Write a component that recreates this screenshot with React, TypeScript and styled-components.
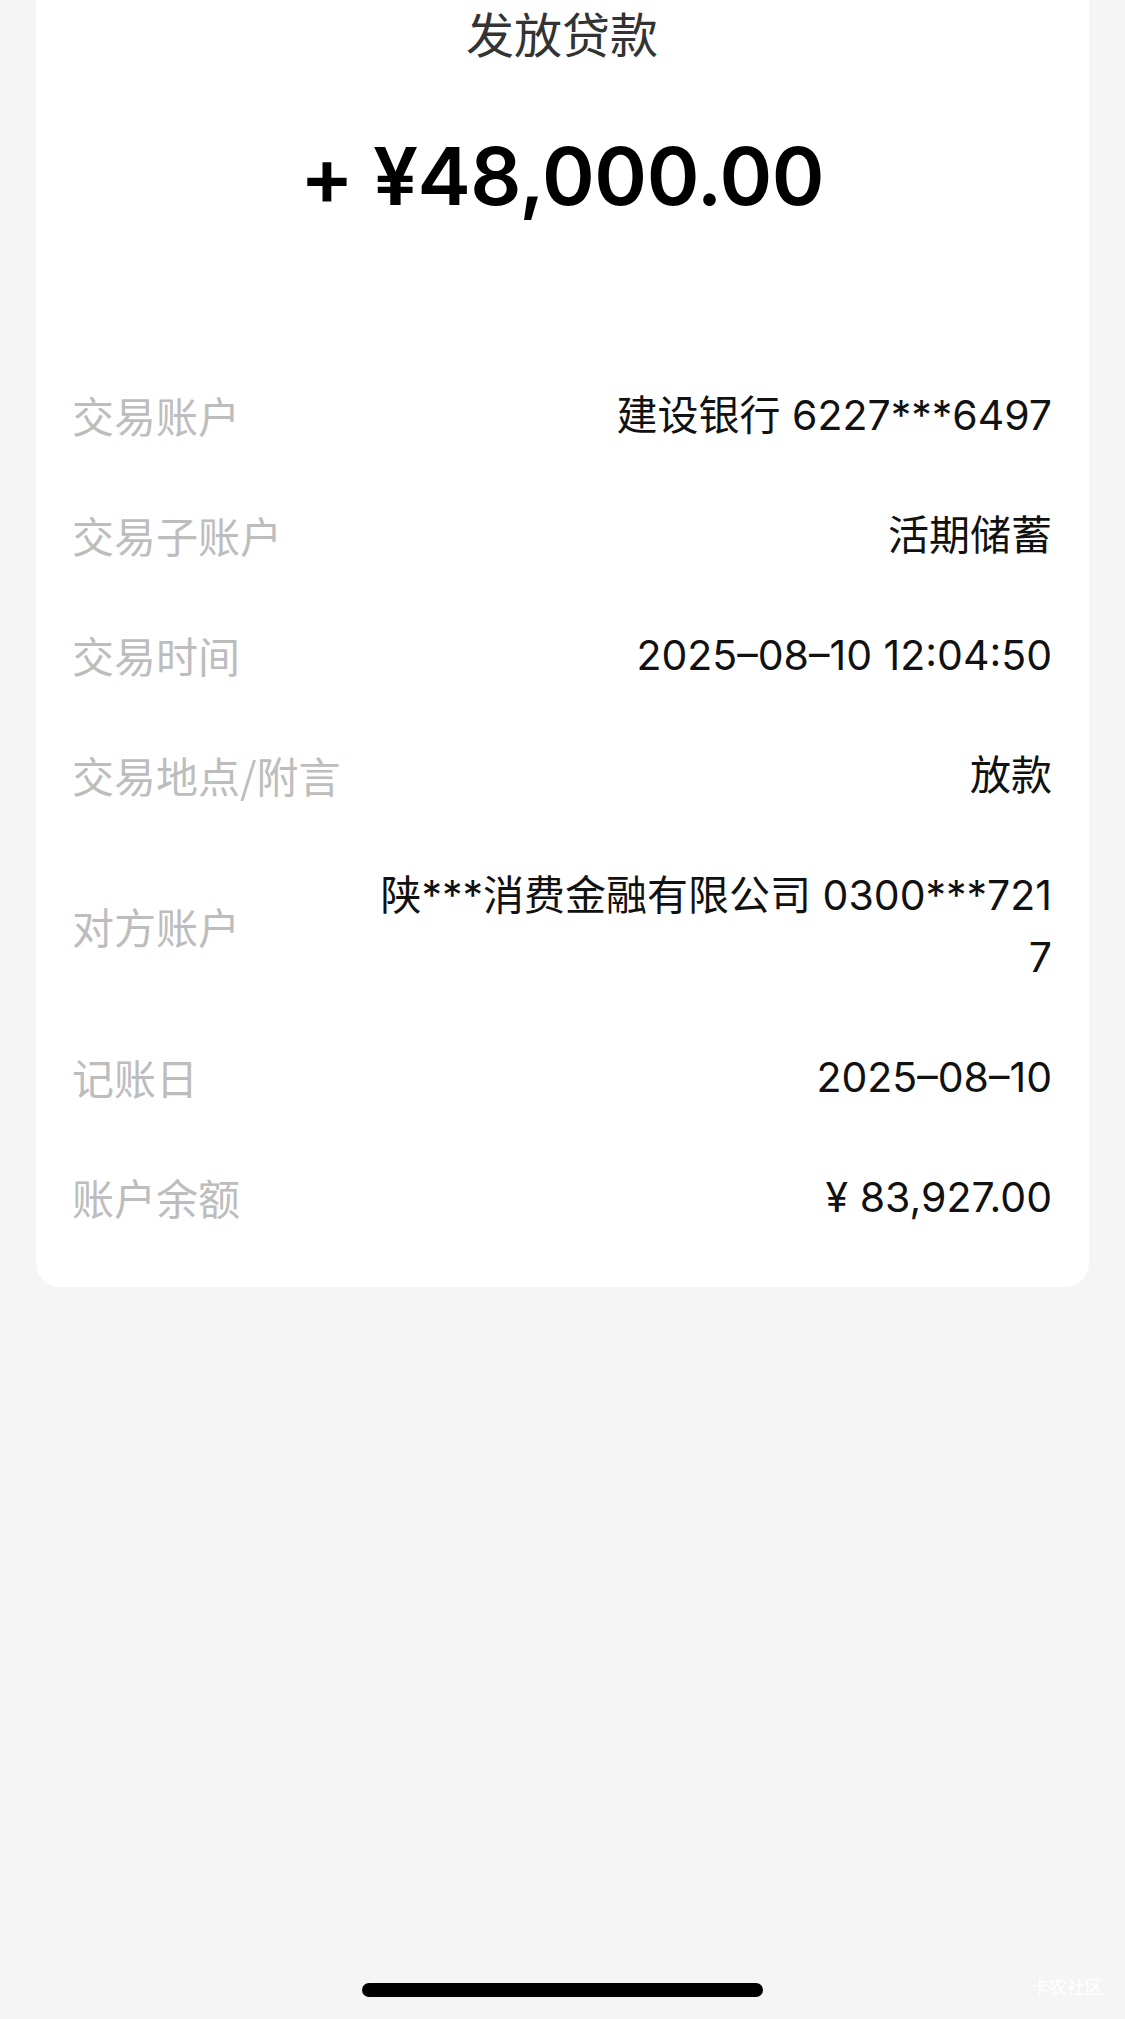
import React from "react";
import styled, { createGlobalStyle } from "styled-components";

const GlobalStyle = createGlobalStyle`
    html, body {
        margin: 0;
        padding: 0;
        background: #f5f5f5;
    }
    body {
        font-family: "Inter", "Noto Sans CJK SC", "Noto Sans", sans-serif;
        -webkit-font-smoothing: antialiased;
    }
`;

const Page = styled.div`
    position: relative;
    min-height: 100vh;
    display: flex;
    flex-direction: column;
    background: #f5f5f5;
`;

const Card = styled.div`
    margin: 0 36px;
    background: #ffffff;
    border-radius: 0 0 24px 24px;
    padding: 0 37px 30px 36px;
`;

const Title = styled.h2`
    margin: 0;
    font-family: "Noto Sans CJK SC", sans-serif;
    font-size: 48px;
    line-height: 64px;
    font-weight: 400;
    color: #333333;
    text-align: center;
`;

const Amount = styled.div`
    margin-top: 72px;
    font-size: 80px;
    line-height: 80px;
    font-weight: 600;
    color: #000000;
    text-align: center;
    letter-spacing: -0.5px;
`;

const Details = styled.div`
    margin-top: 139px;
    display: flex;
    flex-direction: column;
`;

const Row = styled.div`
    display: flex;
    align-items: center;
    justify-content: space-between;
    gap: 30px;
    padding: 29px 0;
`;

const Label = styled.div`
    flex-shrink: 0;
    font-family: "Noto Sans CJK SC", sans-serif;
    font-size: 42px;
    line-height: 62px;
    color: #bdbdbd;
`;

const Value = styled.div`
    flex: 1;
    text-align: right;
    font-size: 41px;
    line-height: 62px;
    color: #111111;
`;

const Footer = styled.div`
    margin-top: auto;
    display: flex;
    justify-content: center;
    padding-bottom: 22px;
`;

const HomeBar = styled.div`
    width: 401px;
    height: 14px;
    border-radius: 7px;
    background: #000000;
`;

const Watermark = styled.div`
    position: absolute;
    right: 22px;
    bottom: 20px;
    font-family: "Noto Sans CJK SC", sans-serif;
    font-size: 18px;
    color: #ffffff;
`;

type Item = { label: string; lines: string[] };

const items: Item[] = [
    { label: "交易账户", lines: ["建设银行 6227***6497"] },
    { label: "交易子账户", lines: ["活期储蓄"] },
    { label: "交易时间", lines: ["2025–08–10 12:04:50"] },
    { label: "交易地点/附言", lines: ["放款"] },
    { label: "对方账户", lines: ["陕***消费金融有限公司 0300***721", "7"] },
    { label: "记账日", lines: ["2025–08–10"] },
    { label: "账户余额", lines: ["¥ 83,927.00"] },
];

export default function App() {
    return (
        <>
            <GlobalStyle />
            <Page>
                <Card>
                    <Title>发放贷款</Title>
                    <Amount>+ ¥48,000.00</Amount>
                    <Details>
                        {items.map(item => (
                            <Row key={item.label}>
                                <Label>{item.label}</Label>
                                <Value>
                                    {item.lines.map((line, i) => (
                                        <div key={i}>{line}</div>
                                    ))}
                                </Value>
                            </Row>
                        ))}
                    </Details>
                </Card>
                <Footer>
                    <HomeBar />
                </Footer>
                <Watermark>卡农社区</Watermark>
            </Page>
        </>
    );
}
